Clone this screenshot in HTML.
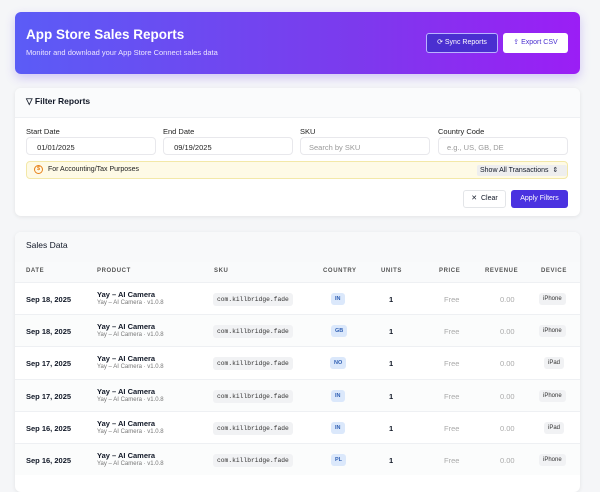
<!DOCTYPE html><html><head><style>
*{margin:0;padding:0;box-sizing:border-box}
body{width:600px;height:477px;overflow:hidden;background:#f5f6f8;font-family:"Liberation Sans",sans-serif;position:relative;color:#111827}
.a{position:absolute}
.hdr{left:15px;top:12px;width:565px;height:62px;border-radius:6px;background:linear-gradient(90deg,#5b5cf6,#7c3aed 60%,#9b1ef5);box-shadow:0 4px 10px rgba(100,60,240,.25)}
.card{background:#fff;border-radius:6px;box-shadow:0 1px 4px rgba(0,0,0,.08)}
.lbl{font-size:7.5px;color:#222}
.inp{height:18px;border:1px solid #e8e8ec;border-radius:4px;font-size:7.5px;padding:5px 8px;background:#fff}
.row{left:15px;width:565px;height:32px;border-top:1px solid #eef0f3;font-size:7.5px}
.row div{position:absolute}
.th{font-size:6px;letter-spacing:.6px;color:#555;font-weight:bold;position:absolute;top:268px}
.pill{background:#f1f2f4;border-radius:3px;font-family:"Liberation Mono",monospace;font-size:6.3px;padding:3px 4px;color:#333}
.cc{background:#dbe8fb;color:#2f5fb3;border-radius:3px;font-size:5.5px;font-weight:bold;padding:3px 4px}
.dv{background:#f1f2f4;border-radius:3px;font-size:6px;padding:3px 4px;color:#333}
</style></head><body>
<div class="a hdr"></div>
<div class="a" style="left:26px;top:27px;color:#fff;font-size:13.5px;font-weight:bold">App Store Sales Reports</div>
<div class="a" style="left:26px;top:48px;color:#ece6ff;font-size:7.5px">Monitor and download your App Store Connect sales data</div>
<div class="a" style="left:426px;top:33px;width:72px;height:20px;border:1px solid #b9b3ff;background:#4a2fd0;border-radius:3px;color:#fff;font-size:7px;text-align:center;line-height:18px">⟳ Sync Reports</div>
<div class="a" style="left:503px;top:33px;width:65px;height:20px;background:#fff;border-radius:3px;color:#4a2fd0;font-size:7px;text-align:center;line-height:20px">⇪ Export CSV</div>

<div class="a card" style="left:15px;top:88px;width:565px;height:128px"></div>
<div class="a" style="left:15px;top:88px;width:565px;height:30px;background:#fafbfc;border-bottom:1px solid #eef0f3;border-radius:6px 6px 0 0"></div>
<div class="a" style="left:26px;top:96px;font-size:8.5px;font-weight:bold">▽ Filter Reports</div>
<div class="a lbl" style="left:26px;top:127px">Start Date</div>
<div class="a lbl" style="left:163px;top:127px">End Date</div>
<div class="a lbl" style="left:300px;top:127px">SKU</div>
<div class="a lbl" style="left:438px;top:127px">Country Code</div>
<div class="a inp" style="left:26px;top:137px;width:130px;color:#222">&nbsp;01/01/2025</div>
<div class="a inp" style="left:163px;top:137px;width:130px;color:#222">&nbsp;09/19/2025</div>
<div class="a inp" style="left:300px;top:137px;width:130px;color:#999">Search by SKU</div>
<div class="a inp" style="left:438px;top:137px;width:130px;color:#999">e.g., US, GB, DE</div>
<div class="a" style="left:26px;top:161px;width:542px;height:18px;background:#fefae6;border:1px solid #f3e8a8;border-radius:4px"></div>
<div class="a" style="left:34px;top:165px;width:9px;height:9px;border-radius:50%;border:1.3px solid #e8811a;color:#e8811a;font-size:5.5px;text-align:center;line-height:7px;font-weight:bold">$</div>
<div class="a" style="left:48px;top:166px;font-size:7px;color:#222">For Accounting/Tax Purposes</div>
<div class="a" style="left:477px;top:165px;width:90px;height:11px;background:#eee;border-radius:2px;font-size:7px;padding-left:3px;line-height:11px">Show All Transactions&nbsp;&nbsp;⇕</div>
<div class="a" style="left:463px;top:190px;width:43px;height:18px;border:1px solid #e3e5e8;border-radius:3px;font-size:7px;text-align:center;line-height:16px">✕&nbsp; Clear</div>
<div class="a" style="left:511px;top:190px;width:57px;height:18px;background:#4a32e0;border-radius:3px;font-size:7px;color:#fff;text-align:center;line-height:18px">Apply Filters</div>

<div class="a card" style="left:15px;top:232px;width:565px;height:260px"></div>
<div class="a" style="left:15px;top:232px;width:565px;height:30px;background:#f8f9fa;border-radius:6px 6px 0 0"></div>
<div class="a" style="left:26px;top:240px;font-size:8.5px">Sales Data</div>
<div class="a" style="left:15px;top:262px;width:565px;height:20px;background:#f9fafb"></div>
<div class="th" style="left:26px">DATE</div>
<div class="th" style="left:97px">PRODUCT</div>
<div class="th" style="left:214px">SKU</div>
<div class="th" style="left:323px">COUNTRY</div>
<div class="th" style="left:381px">UNITS</div>
<div class="th" style="left:439px">PRICE</div>
<div class="th" style="left:485px">REVENUE</div>
<div class="th" style="left:541px">DEVICE</div>

<div class="a row" style="top:282px;background:#fff"><div style="left:11px;top:12px;font-weight:bold">Sep 18, 2025</div><div style="left:82px;top:7px;font-weight:bold">Yay – AI Camera</div><div style="left:82px;top:17px;font-size:6px;color:#777">Yay – AI Camera · v1.0.8</div><div class="pill" style="left:198px;top:10px">com.killbridge.fade</div><div class="cc" style="left:316px;top:10px">IN</div><div style="left:374px;top:12px;font-weight:bold">1</div><div style="left:429px;top:12px;color:#aaa">Free</div><div style="left:485px;top:12px;color:#aaa">0.00</div><div class="dv" style="left:524px;top:10px">iPhone</div></div>
<div class="a row" style="top:314px;background:#fbfcfc"><div style="left:11px;top:12px;font-weight:bold">Sep 18, 2025</div><div style="left:82px;top:7px;font-weight:bold">Yay – AI Camera</div><div style="left:82px;top:17px;font-size:6px;color:#777">Yay – AI Camera · v1.0.8</div><div class="pill" style="left:198px;top:10px">com.killbridge.fade</div><div class="cc" style="left:316px;top:10px">GB</div><div style="left:374px;top:12px;font-weight:bold">1</div><div style="left:429px;top:12px;color:#aaa">Free</div><div style="left:485px;top:12px;color:#aaa">0.00</div><div class="dv" style="left:524px;top:10px">iPhone</div></div>
<div class="a row" style="top:346px;background:#fff"><div style="left:11px;top:12px;font-weight:bold">Sep 17, 2025</div><div style="left:82px;top:7px;font-weight:bold">Yay – AI Camera</div><div style="left:82px;top:17px;font-size:6px;color:#777">Yay – AI Camera · v1.0.8</div><div class="pill" style="left:198px;top:10px">com.killbridge.fade</div><div class="cc" style="left:315px;top:10px">NO</div><div style="left:374px;top:12px;font-weight:bold">1</div><div style="left:429px;top:12px;color:#aaa">Free</div><div style="left:485px;top:12px;color:#aaa">0.00</div><div class="dv" style="left:529px;top:10px">iPad</div></div>
<div class="a row" style="top:379px;background:#fbfcfc"><div style="left:11px;top:12px;font-weight:bold">Sep 17, 2025</div><div style="left:82px;top:7px;font-weight:bold">Yay – AI Camera</div><div style="left:82px;top:17px;font-size:6px;color:#777">Yay – AI Camera · v1.0.8</div><div class="pill" style="left:198px;top:10px">com.killbridge.fade</div><div class="cc" style="left:316px;top:10px">IN</div><div style="left:374px;top:12px;font-weight:bold">1</div><div style="left:429px;top:12px;color:#aaa">Free</div><div style="left:485px;top:12px;color:#aaa">0.00</div><div class="dv" style="left:524px;top:10px">iPhone</div></div>
<div class="a row" style="top:411px;background:#fff"><div style="left:11px;top:12px;font-weight:bold">Sep 16, 2025</div><div style="left:82px;top:7px;font-weight:bold">Yay – AI Camera</div><div style="left:82px;top:17px;font-size:6px;color:#777">Yay – AI Camera · v1.0.8</div><div class="pill" style="left:198px;top:10px">com.killbridge.fade</div><div class="cc" style="left:316px;top:10px">IN</div><div style="left:374px;top:12px;font-weight:bold">1</div><div style="left:429px;top:12px;color:#aaa">Free</div><div style="left:485px;top:12px;color:#aaa">0.00</div><div class="dv" style="left:529px;top:10px">iPad</div></div>
<div class="a row" style="top:443px;background:#fbfcfc"><div style="left:11px;top:12px;font-weight:bold">Sep 16, 2025</div><div style="left:82px;top:7px;font-weight:bold">Yay – AI Camera</div><div style="left:82px;top:17px;font-size:6px;color:#777">Yay – AI Camera · v1.0.8</div><div class="pill" style="left:198px;top:10px">com.killbridge.fade</div><div class="cc" style="left:316px;top:10px">PL</div><div style="left:374px;top:12px;font-weight:bold">1</div><div style="left:429px;top:12px;color:#aaa">Free</div><div style="left:485px;top:12px;color:#aaa">0.00</div><div class="dv" style="left:524px;top:10px">iPhone</div></div>
</body></html>
